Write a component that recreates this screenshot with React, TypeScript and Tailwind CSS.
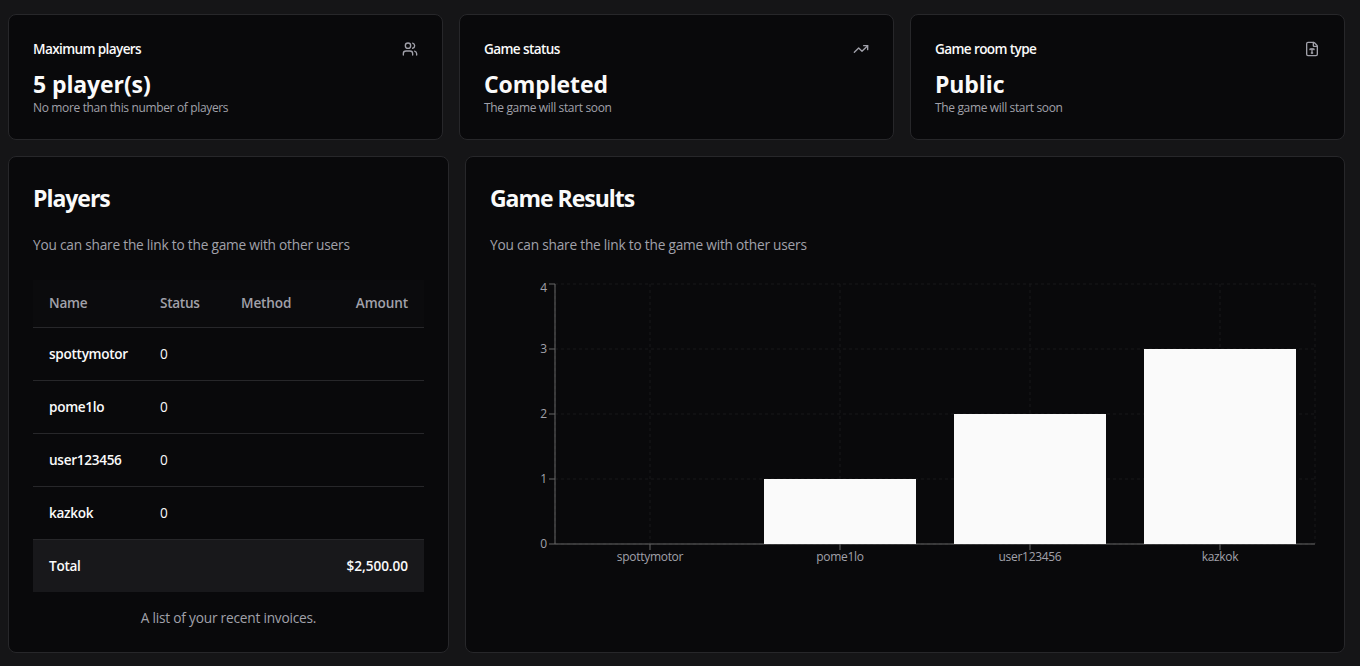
import type { ReactNode } from "react";
import { FileType, TrendingUp, Users } from "lucide-react";

const players = [
  { name: "spottymotor", status: 0, score: 0 },
  { name: "pome1lo", status: 0, score: 1 },
  { name: "user123456", status: 0, score: 2 },
  { name: "kazkok", status: 0, score: 3 },
];

function Card({ children, className = "" }: { children: ReactNode; className?: string }) {
  return <section className={`rounded-lg border border-[#27272a] bg-[#09090b] p-6 ${className}`}>{children}</section>;
}

function StatCard({ title, value, note, icon }: { title: string; value: string; note: string; icon: ReactNode }) {
  return (
    <Card className="h-[126px]">
      <div className="flex h-5 items-center justify-between">
        <h3 className="text-[13.6px] leading-5 font-semibold tracking-[-0.63px]">{title}</h3>
        <span className="text-[#a1a1aa]">{icon}</span>
      </div>
      <div className="mt-[9px] text-[23px] leading-8 font-bold tracking-[-0.1px]">{value}</div>
      <p className="text-[12px] leading-4 tracking-[-0.35px] text-[#a1a1aa]">{note}</p>
    </Card>
  );
}

function PanelHeader({ title }: { title: string }) {
  return (
    <>
      <h2 className="-mt-px text-[23px] leading-9 font-bold tracking-[-1.03px]">{title}</h2>
      <p className="mt-[19px] text-[13.7px] leading-5 tracking-[-0.22px] text-[#a1a1aa]">
        You can share the link to the game with other users
      </p>
    </>
  );
}

function PlayersTable() {
  return (
    <table className="mt-[25px] w-full table-fixed border-separate border-spacing-0 text-left text-[13.6px] leading-5">
      <colgroup>
        <col className="w-[111px]" />
        <col className="w-[81px]" />
        <col className="w-[92px]" />
        <col />
      </colgroup>
      <thead>
        <tr className="h-12 bg-[#0b0b0d] text-[#a1a1aa]">
          <th className="border-b border-[#27272a] px-4 pb-[2px] font-semibold tracking-[-0.25px]">Name</th>
          <th className="border-b border-[#27272a] px-4 pb-[2px] font-semibold tracking-[-0.3px]">Status</th>
          <th className="border-b border-[#27272a] px-4 pb-[2px] font-semibold tracking-[-0.15px]">Method</th>
          <th className="border-b border-[#27272a] px-4 pb-[2px] text-right font-semibold tracking-[-0.12px]">Amount</th>
        </tr>
      </thead>
      <tbody>
        {players.map((p) => (
          <tr key={p.name} className="h-[53px]">
            <td className="border-b border-[#27272a] px-4 font-semibold tracking-[-0.3px]">{p.name}</td>
            <td className="border-b border-[#27272a] px-4">{p.status}</td>
            <td className="border-b border-[#27272a]" />
            <td className="border-b border-[#27272a]" />
          </tr>
        ))}
      </tbody>
      <tfoot>
        <tr className="h-[52px] bg-[#18181b] font-semibold">
          <td colSpan={3} className="px-4 tracking-[-0.3px]">Total</td>
          <td className="px-4 text-right tracking-[-0.05px]">$2,500.00</td>
        </tr>
      </tfoot>
    </table>
  );
}

function ResultsChart() {
  const left = 65;
  const right = 825;
  const top = 5;
  const bottom = 265;
  const band = 190;
  const unit = 65;
  const ticks = [0, 1, 2, 3, 4];
  return (
    <svg width="830" height="300" viewBox="0 0 830 300" className="mt-6 block text-[12px]">
      <g stroke="#18181b" strokeDasharray="3 3">
        {ticks.map((t) => (
          <line key={t} x1={left} x2={right} y1={bottom - t * unit} y2={bottom - t * unit} />
        ))}
        {players.map((p, i) => (
          <line key={p.name} x1={left + band * (i + 0.5)} x2={left + band * (i + 0.5)} y1={top} y2={bottom} />
        ))}
        <line x1={left} x2={left} y1={top} y2={bottom} />
        <line x1={right} x2={right} y1={top} y2={bottom} />
      </g>
      <g stroke="#666666">
        <line x1={left} x2={right} y1={bottom} y2={bottom} />
        <line x1={left} x2={left} y1={top} y2={bottom} />
        {ticks.map((t) => (
          <line key={t} x1={left - 6} x2={left} y1={bottom - t * unit} y2={bottom - t * unit} />
        ))}
        {players.map((p, i) => (
          <line key={p.name} x1={left + band * (i + 0.5)} x2={left + band * (i + 0.5)} y1={bottom} y2={bottom + 6} />
        ))}
      </g>
      <g fill="#a1a1aa">
        {ticks.map((t) => (
          <text key={t} x={left - 8} y={bottom - t * unit + (t === 4 ? 8 : 4)} textAnchor="end">{t}</text>
        ))}
        {players.map((p, i) => (
          <text key={p.name} x={left + band * (i + 0.5)} y={bottom + 17} textAnchor="middle" className="tracking-[-0.3px]">{p.name}</text>
        ))}
      </g>
      <g fill="#fafafa">
        {players.map((p, i) => (
          <rect key={p.name} x={left + band * i + 19} y={bottom - p.score * unit} width={152} height={p.score * unit} />
        ))}
      </g>
    </svg>
  );
}

export default function App() {
  return (
    <main className="flex h-[666px] w-full flex-col gap-4 bg-[#151517] pt-[14px] pr-[15px] pb-[13px] pl-2 font-['Open_Sans','Noto_Sans',sans-serif] text-[#fafafa]">
      <div className="grid grid-cols-3 gap-4">
        <StatCard title="Maximum players" value="5 player(s)" note="No more than this number of players" icon={<Users size={16} />} />
        <StatCard title="Game status" value="Completed" note="The game will start soon" icon={<TrendingUp size={16} />} />
        <StatCard title="Game room type" value="Public" note="The game will start soon" icon={<FileType size={16} />} />
      </div>
      <div className="grid grid-cols-[441px_minmax(0,1fr)] gap-4">
        <Card className="h-[497px]">
          <PanelHeader title="Players" />
          <PlayersTable />
          <p className="mt-4 text-center text-[13.7px] leading-5 tracking-[-0.22px] text-[#a1a1aa]">A list of your recent invoices.</p>
        </Card>
        <Card className="h-[497px]">
          <PanelHeader title="Game Results" />
          <ResultsChart />
        </Card>
      </div>
    </main>
  );
}
